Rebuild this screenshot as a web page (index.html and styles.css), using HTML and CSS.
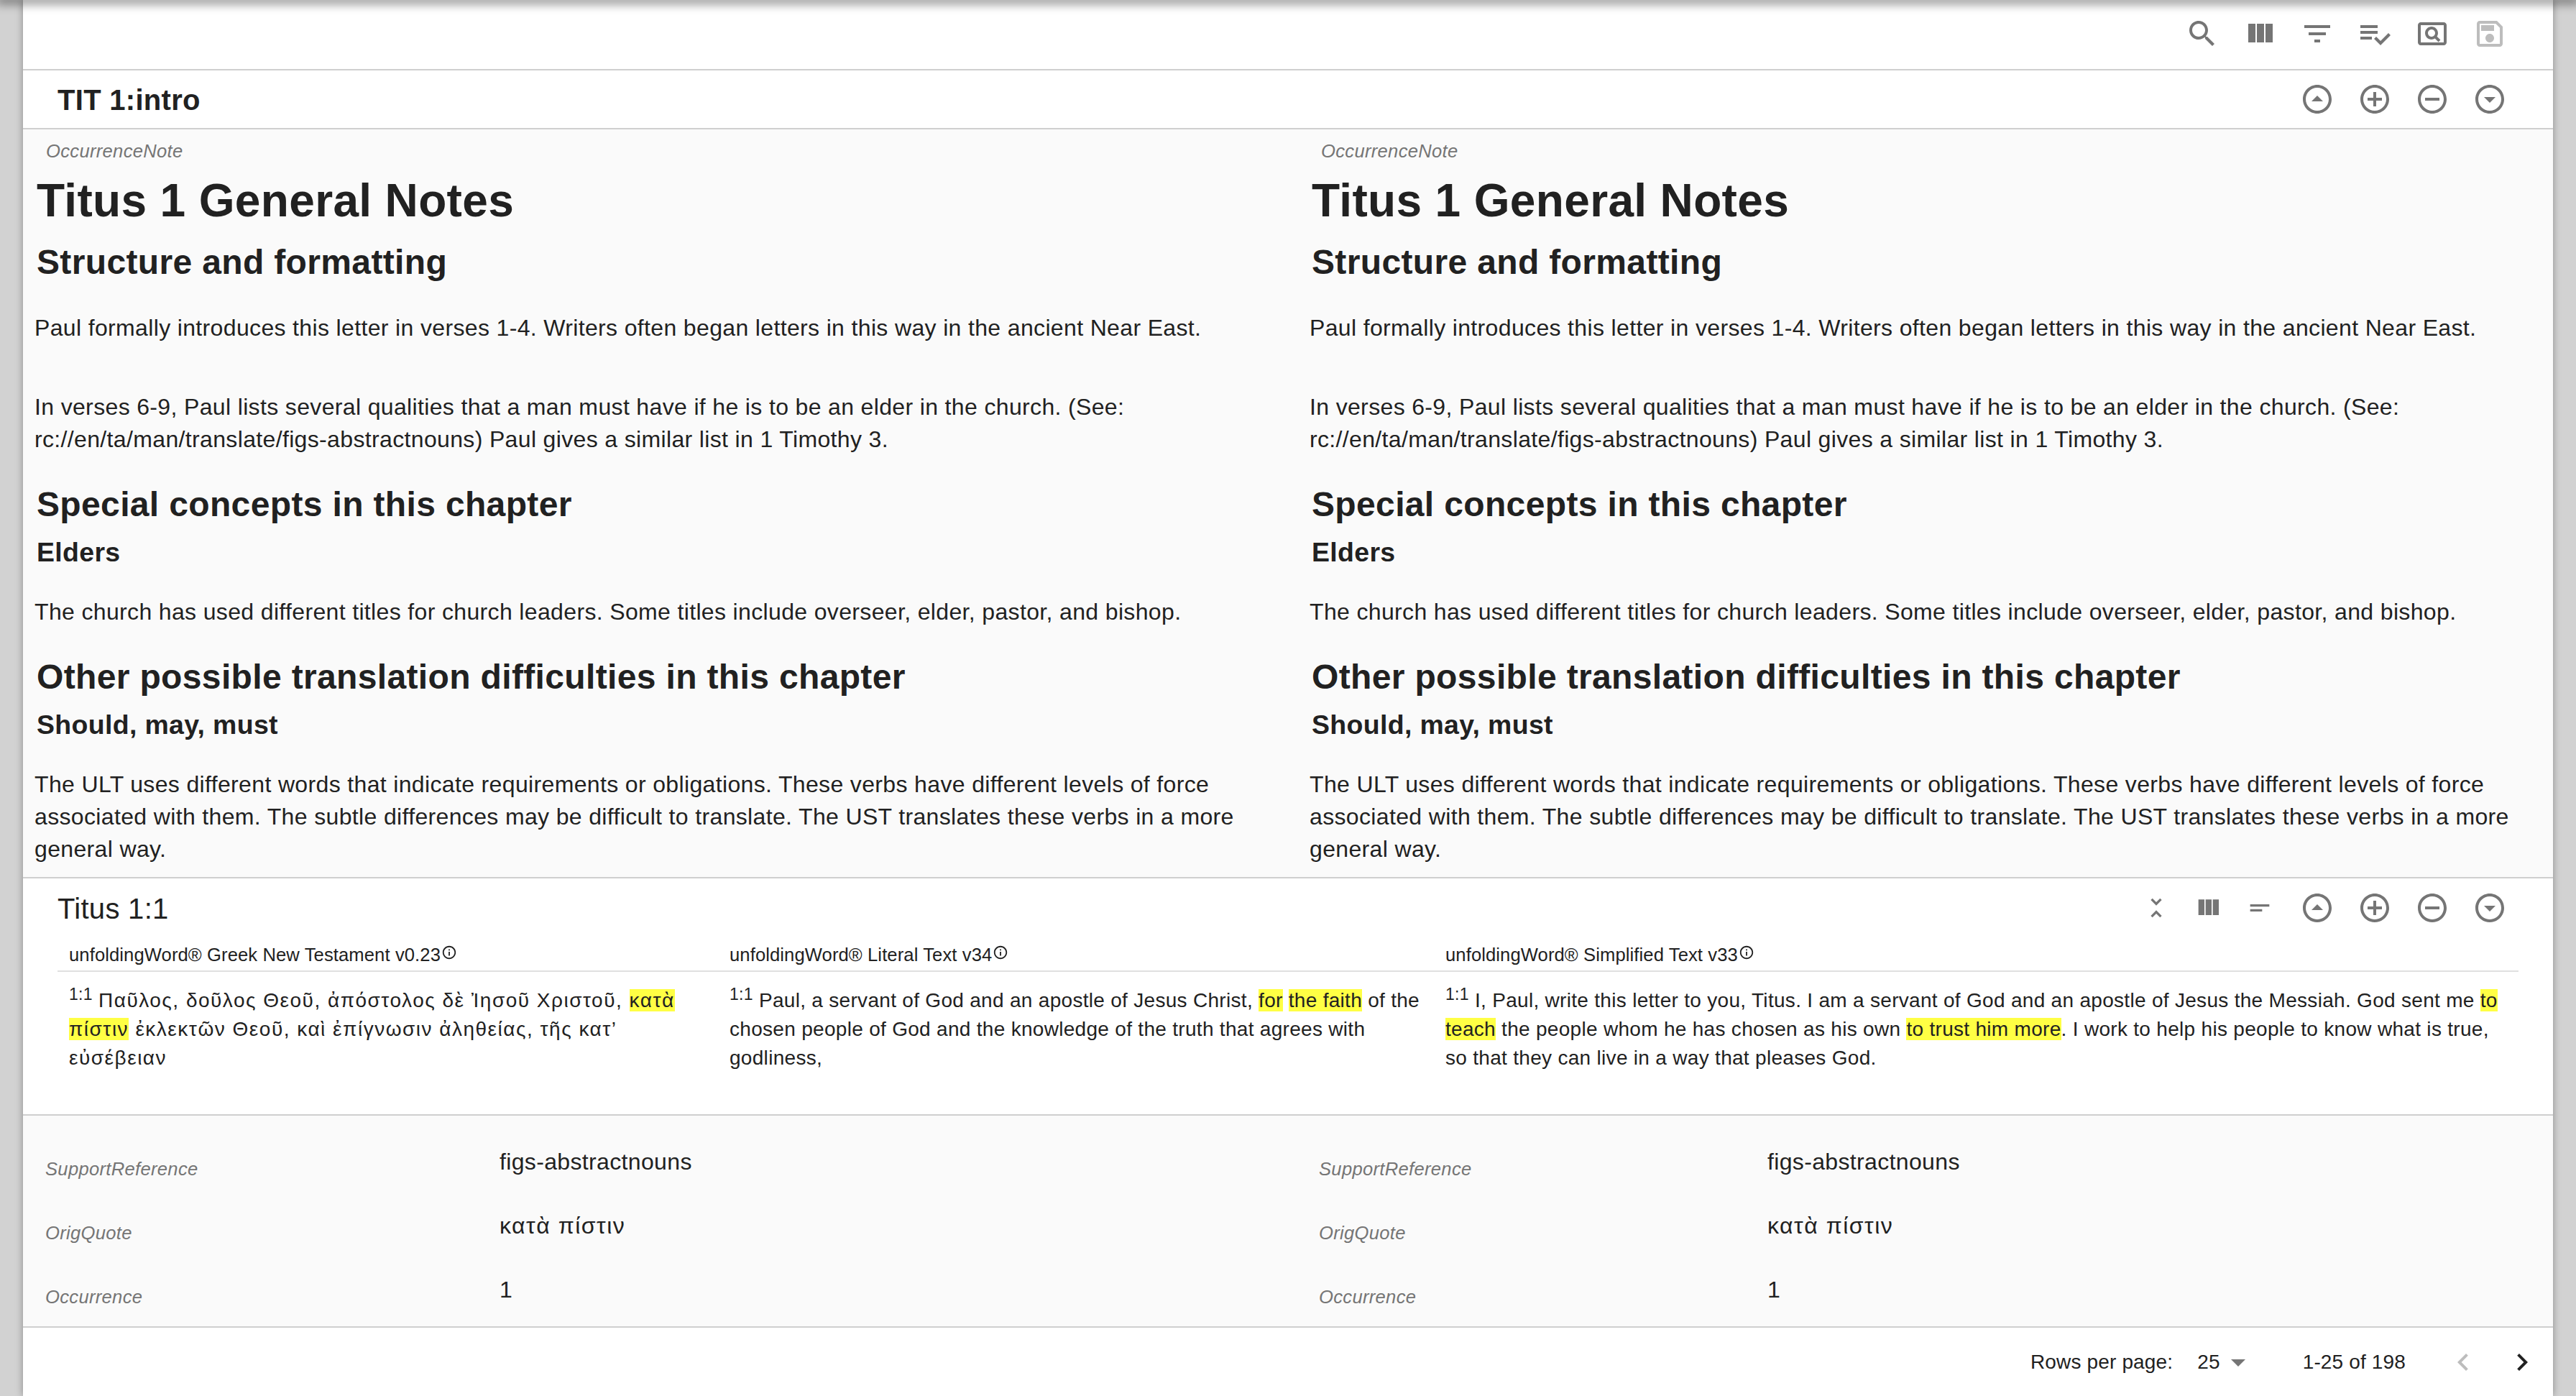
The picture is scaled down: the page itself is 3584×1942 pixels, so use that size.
FILE: index.html
```html
<!DOCTYPE html>
<html lang="en">

<head>
    <meta charset="UTF-8">
    <title>TIT 1:intro</title>
    <link rel="stylesheet" href="styles.css">
</head>

<body>
    <div class="appbar-shadow"></div>

    <div class="paper">
        <div class="toolbar">
            <button class="icon-btn"><svg viewBox="0 0 24 24"><path d="M15.5 14h-.79l-.28-.27C15.41 12.59 16 11.11 16 9.5 16 5.91 13.09 3 9.5 3S3 5.91 3 9.5 5.91 16 9.5 16c1.61 0 3.09-.59 4.23-1.57l.27.28v.79l5 4.99L20.49 19l-4.99-5zm-6 0C7.01 14 5 11.99 5 9.5S7.01 5 9.5 5 14 7.01 14 9.5 11.99 14 9.5 14z"/></svg></button>
            <button class="icon-btn"><svg viewBox="0 0 24 24"><path d="M10 18h5V5h-5v13zm-6 0h5V5H4v13zM16 5v13h5V5h-5z"/></svg></button>
            <button class="icon-btn"><svg viewBox="0 0 24 24"><path d="M10 18h4v-2h-4v2zM3 6v2h18V6H3zm3 7h12v-2H6v2z"/></svg></button>
            <button class="icon-btn"><svg viewBox="0 0 24 24"><path d="M14 10H2v2h12v-2zm0-4H2v2h12V6zM2 16h8v-2H2v2zm19.5-4.5L23 13l-6.99 7-4.51-4.5L13 14l3.01 3 5.49-5.5z"/></svg></button>
            <button class="icon-btn"><svg viewBox="0 0 24 24"><path d="M20 4H4c-1.1 0-2 .9-2 2v12c0 1.1.9 2 2 2h16c1.1 0 2-.9 2-2V6c0-1.1-.9-2-2-2zm0 14H4V6h16v12z"/><path d="M11.5 7C9 7 7 9 7 11.500s2 4.500 4.500 4.500c.88 0 1.690-.26 2.380-.7l2.410 2.410 1.410-1.410-2.410-2.410c.44-.69.7-1.500.7-2.390C16 9 14 7 11.500 7zm0 7C10.120 14 9 12.880 9 11.500S10.120 9 11.500 9 14 10.120 14 11.500 12.880 14 11.500 14z"/></svg></button>
            <button class="icon-btn disabled"><svg viewBox="0 0 24 24"><path d="M17 3H5c-1.110 0-2 .9-2 2v14c0 1.100.89 2 2 2h14c1.100 0 2-.9 2-2V7l-4-4zm2 16H5V5h11.170L19 7.830V19zm-7-7c-1.660 0-3 1.340-3 3s1.340 3 3 3 3-1.340 3-3-1.340-3-3-3zM6 6h9v4H6z"/></svg></button>
        </div>

        <div class="row-head">
            <h6 class="row-title bold">TIT 1:intro</h6>
            <div class="row-actions">
                <button class="icon-btn"><svg viewBox="0 0 24 24"><path d="M12 2C6.480 2 2 6.480 2 12s4.480 10 10 10 10-4.480 10-10S17.520 2 12 2zm0 18c-4.410 0-8-3.590-8-8s3.590-8 8-8 8 3.590 8 8-3.590 8-8 8z"/><path d="M8 13.500l4-4 4 4z"/></svg></button>
                <button class="icon-btn"><svg viewBox="0 0 24 24"><path d="M13 7h-2v4H7v2h4v4h2v-4h4v-2h-4V7zm-1-5C6.490 2 2 6.490 2 12s4.490 10 10 10 10-4.490 10-10S17.510 2 12 2zm0 18c-4.410 0-8-3.590-8-8s3.590-8 8-8 8 3.590 8 8-3.590 8-8 8z"/></svg></button>
                <button class="icon-btn"><svg viewBox="0 0 24 24"><path d="M7 11v2h10v-2H7zm5-9C6.480 2 2 6.480 2 12s4.480 10 10 10 10-4.480 10-10S17.520 2 12 2zm0 18c-4.410 0-8-3.590-8-8s3.590-8 8-8 8 3.590 8 8-3.590 8-8 8z"/></svg></button>
                <button class="icon-btn"><svg viewBox="0 0 24 24"><path d="M12 2C6.480 2 2 6.480 2 12s4.480 10 10 10 10-4.480 10-10S17.520 2 12 2zm0 18c-4.410 0-8-3.590-8-8s3.590-8 8-8 8 3.590 8 8-3.590 8-8 8z"/><path d="M8 10.500l4 4 4-4z"/></svg></button>
            </div>
        </div>

        <div class="notes">
            <div class="note">
                <div class="field-label">OccurrenceNote</div>
                <h1>Titus 1 General Notes</h1>
                <h2 class="first">Structure and formatting</h2>
                <p class="intro">Paul formally introduces this letter in verses 1-4. Writers often began letters in this way in the ancient Near East.</p>
                <p class="spaced">In verses 6-9, Paul lists several qualities that a man must have if he is to be an elder in the church. (See: rc://en/ta/man/translate/figs-abstractnouns) Paul gives a similar list in 1 Timothy 3.</p>
                <h2>Special concepts in this chapter</h2>
                <h3>Elders</h3>
                <p>The church has used different titles for church leaders. Some titles include overseer, elder, pastor, and bishop.</p>
                <h2>Other possible translation difficulties in this chapter</h2>
                <h3>Should, may, must</h3>
                <p>The ULT uses different words that indicate requirements or obligations. These verbs have different levels of force associated with them. The subtle differences may be difficult to translate. The UST translates these verbs in a more general way.</p>
            </div>
            <div class="note">
                <div class="field-label">OccurrenceNote</div>
                <h1>Titus 1 General Notes</h1>
                <h2 class="first">Structure and formatting</h2>
                <p class="intro">Paul formally introduces this letter in verses 1-4. Writers often began letters in this way in the ancient Near East.</p>
                <p class="spaced">In verses 6-9, Paul lists several qualities that a man must have if he is to be an elder in the church. (See: rc://en/ta/man/translate/figs-abstractnouns) Paul gives a similar list in 1 Timothy 3.</p>
                <h2>Special concepts in this chapter</h2>
                <h3>Elders</h3>
                <p>The church has used different titles for church leaders. Some titles include overseer, elder, pastor, and bishop.</p>
                <h2>Other possible translation difficulties in this chapter</h2>
                <h3>Should, may, must</h3>
                <p>The ULT uses different words that indicate requirements or obligations. These verbs have different levels of force associated with them. The subtle differences may be difficult to translate. The UST translates these verbs in a more general way.</p>
            </div>
        </div>

        <div class="scripture">
            <div class="row-head scripture-head">
                <h6 class="row-title">Titus 1:1</h6>
                <div class="row-actions">
                    <div class="small-icons">
                        <button class="icon-btn small"><svg viewBox="0 0 24 24"><path d="M7.410 18.590L8.830 20 12 16.830 15.170 20l1.410-1.410L12 14l-4.590 4.590zm9.180-13.180L15.170 4 12 7.170 8.830 4 7.410 5.410 12 10l4.590-4.590z"/></svg></button>
                        <button class="icon-btn small"><svg viewBox="0 0 24 24"><path d="M10 18h5V5h-5v13zm-6 0h5V5H4v13zM16 5v13h5V5h-5z"/></svg></button>
                        <button class="icon-btn small"><svg viewBox="0 0 24 24"><path d="M4 9h16v2H4zm0 4h10v2H4z"/></svg></button>
                    </div>
                    <button class="icon-btn"><svg viewBox="0 0 24 24"><path d="M12 2C6.480 2 2 6.480 2 12s4.480 10 10 10 10-4.480 10-10S17.520 2 12 2zm0 18c-4.410 0-8-3.590-8-8s3.590-8 8-8 8 3.590 8 8-3.590 8-8 8z"/><path d="M8 13.500l4-4 4 4z"/></svg></button>
                    <button class="icon-btn"><svg viewBox="0 0 24 24"><path d="M13 7h-2v4H7v2h4v4h2v-4h4v-2h-4V7zm-1-5C6.490 2 2 6.490 2 12s4.490 10 10 10 10-4.490 10-10S17.510 2 12 2zm0 18c-4.410 0-8-3.590-8-8s3.590-8 8-8 8 3.590 8 8-3.590 8-8 8z"/></svg></button>
                    <button class="icon-btn"><svg viewBox="0 0 24 24"><path d="M7 11v2h10v-2H7zm5-9C6.480 2 2 6.480 2 12s4.480 10 10 10 10-4.480 10-10S17.520 2 12 2zm0 18c-4.410 0-8-3.590-8-8s3.590-8 8-8 8 3.590 8 8-3.590 8-8 8z"/></svg></button>
                    <button class="icon-btn"><svg viewBox="0 0 24 24"><path d="M12 2C6.480 2 2 6.480 2 12s4.480 10 10 10 10-4.480 10-10S17.520 2 12 2zm0 18c-4.410 0-8-3.590-8-8s3.590-8 8-8 8 3.590 8 8-3.590 8-8 8z"/><path d="M8 10.500l4 4 4-4z"/></svg></button>
                </div>
            </div>
            <div class="texts">
                <div class="text-col">
                    <div class="text-head">unfoldingWord® Greek New Testament v0.23<svg class="info" viewBox="0 0 24 24"><path d="M11 7h2v2h-2zm0 4h2v6h-2zm1-9C6.480 2 2 6.480 2 12s4.480 10 10 10 10-4.480 10-10S17.520 2 12 2zm0 18c-4.410 0-8-3.590-8-8s3.590-8 8-8 8 3.590 8 8-3.590 8-8 8z"/></svg></div>
                    <div class="text-body"><sup>1:1</sup> <span class="greek">Παῦλος, δοῦλος Θεοῦ, ἀπόστολος δὲ Ἰησοῦ Χριστοῦ, <mark>κατὰ πίστιν</mark> ἐκλεκτῶν Θεοῦ, καὶ ἐπίγνωσιν ἀληθείας, τῆς κατ’ εὐσέβειαν</span></div>
                </div>
                <div class="text-col">
                    <div class="text-head">unfoldingWord® Literal Text v34<svg class="info" viewBox="0 0 24 24"><path d="M11 7h2v2h-2zm0 4h2v6h-2zm1-9C6.480 2 2 6.480 2 12s4.480 10 10 10 10-4.480 10-10S17.520 2 12 2zm0 18c-4.410 0-8-3.590-8-8s3.590-8 8-8 8 3.590 8 8-3.590 8-8 8z"/></svg></div>
                    <div class="text-body"><sup>1:1</sup> Paul, a servant of God and an apostle of Jesus Christ, <mark>for</mark> <mark>the faith</mark> of the chosen people of God and the knowledge of the truth that agrees with godliness,</div>
                </div>
                <div class="text-col">
                    <div class="text-head">unfoldingWord® Simplified Text v33<svg class="info" viewBox="0 0 24 24"><path d="M11 7h2v2h-2zm0 4h2v6h-2zm1-9C6.480 2 2 6.480 2 12s4.480 10 10 10 10-4.480 10-10S17.520 2 12 2zm0 18c-4.410 0-8-3.590-8-8s3.590-8 8-8 8 3.590 8 8-3.590 8-8 8z"/></svg></div>
                    <div class="text-body"><sup>1:1</sup> I, Paul, write this letter to you, Titus. I am a servant of God and an apostle of Jesus the Messiah. God sent me <mark>to teach</mark> the people whom he has chosen as his own <mark>to trust him more</mark>. I work to help his people to know what is true, so that they can live in a way that pleases God.</div>
                </div>
            </div>
        </div>

        <div class="fields">
            <div class="field-col">
                <div class="field">
                    <div class="field-label">SupportReference</div>
                    <div class="field-value">figs-abstractnouns</div>
                </div>
                <div class="field">
                    <div class="field-label">OrigQuote</div>
                    <div class="field-value greek">κατὰ πίστιν</div>
                </div>
                <div class="field">
                    <div class="field-label">Occurrence</div>
                    <div class="field-value">1</div>
                </div>
            </div>
            <div class="field-col right">
                <div class="field">
                    <div class="field-label">SupportReference</div>
                    <div class="field-value">figs-abstractnouns</div>
                </div>
                <div class="field">
                    <div class="field-label">OrigQuote</div>
                    <div class="field-value greek">κατὰ πίστιν</div>
                </div>
                <div class="field">
                    <div class="field-label">Occurrence</div>
                    <div class="field-value">1</div>
                </div>
            </div>
        </div>

        <div class="pager">
            <span class="pager-label">Rows per page:</span>
            <span class="pager-select">25<svg viewBox="0 0 24 24"><path d="M7 10l5 5 5-5z"/></svg></span>
            <span class="pager-count">1-25 of 198</span>
            <button class="page-btn off"><svg viewBox="0 0 24 24"><path d="M15.410 7.410L14 6l-6 6 6 6 1.410-1.410L10.830 12z"/></svg></button>
            <button class="page-btn"><svg viewBox="0 0 24 24"><path d="M10 6L8.590 7.410 13.170 12l-4.580 4.590L10 18l6-6z"/></svg></button>
        </div>
    </div>
</body>

</html>
```

FILE: styles.css
```css
* {
    box-sizing: border-box;
}

html,
body {
    height: 100%;
}

body {
    margin: 0;
    overflow: hidden;
    background-color: #d2d2d2;
    font-family: "Liberation Sans", Arial, sans-serif;
    color: #212121;
}

.appbar-shadow {
    position: absolute;
    top: 0;
    left: 0;
    right: 0;
    height: 0;
    z-index: 2;
    box-shadow: 0 0 14px 5px rgba(0, 0, 0, 0.5);
}

.paper {
    display: flex;
    flex-direction: column;
    height: 1942px;
    margin: 0 32px;
    background-color: #fff;
    box-shadow: 0 0 10px rgba(0, 0, 0, 0.35);
}

.paper > * {
    flex: none;
}

button {
    border: 0;
    padding: 0;
    background: none;
}

svg {
    display: block;
    fill: currentColor;
}

/* top toolbar */
.toolbar {
    display: flex;
    justify-content: flex-end;
    align-items: center;
    height: 98px;
    padding: 0 48px 2px 0;
    border-bottom: 2px solid #cfcfcf;
}

.icon-btn {
    display: flex;
    justify-content: center;
    align-items: center;
    width: 80px;
    color: #757575;
}

.icon-btn svg {
    width: 48px;
    height: 48px;
}

.icon-btn.disabled {
    color: #bdbdbd;
}

.icon-btn.small {
    width: 72px;
}

.icon-btn.small svg {
    width: 40px;
    height: 40px;
}

.small-icons {
    display: flex;
    margin-right: 4px;
}

/* row titles */
.row-head {
    display: flex;
    justify-content: space-between;
    align-items: center;
    height: 82px;
    padding: 0 48px;
    border-bottom: 2px solid #cfcfcf;
}

.row-title {
    margin: 2px 0 0;
    font-size: 40px;
    font-weight: 400;
    letter-spacing: 0.3px;
}

.row-title.bold {
    font-weight: 700;
}

.row-actions {
    display: flex;
    align-items: center;
}

/* note columns */
.notes {
    display: grid;
    grid-template-columns: 1fr 1fr;
    column-gap: 48px;
    height: 1040px;
    overflow: hidden;
    padding: 0 4px 0 16px;
    background-color: #fafafa;
    letter-spacing: 0.35px;
}

.field-label {
    font-size: 25.6px;
    font-style: italic;
    letter-spacing: 0.3px;
    color: #757575;
}

.note .field-label {
    padding: 16px 0 0 16px;
    line-height: 28px;
}

.note h1 {
    margin: 18px 0 0 3px;
    font-size: 64px;
    line-height: 74px;
}

.note h2 {
    margin: 40px 0 0 3px;
    font-size: 48px;
    line-height: 55px;
}

.note h2.first {
    margin-top: 21px;
}

.note h3 {
    margin: 18px 0 0 3px;
    font-size: 37.44px;
    line-height: 42px;
}

.note p {
    margin: 40px 0 0;
    font-size: 32px;
    line-height: 45px;
}

.note p.intro {
    margin-top: 42px;
}

.note p.spaced {
    margin-top: 65px;
}

/* scripture panel */
.scripture {
    height: 332px;
    border-top: 2px solid #cfcfcf;
    border-bottom: 2px solid #cfcfcf;
}

.scripture-head {
    height: 82px;
    border-bottom: 0;
}

.texts {
    display: grid;
    grid-template-columns: 919px 996px 1509px;
    margin: 0 48px;
}

.text-head {
    display: flex;
    align-items: flex-start;
    height: 48px;
    padding: 10px 16px 0;
    border-bottom: 2px solid #e0e0e0;
    font-size: 25.6px;
    line-height: 28px;
    letter-spacing: 0.1px;
}

.info {
    flex: none;
    width: 22px;
    height: 22px;
    margin-left: 1px;
}

.text-body {
    padding: 20px 16px 0;
    font-size: 28px;
    line-height: 40px;
    letter-spacing: 0.3px;
}

.text-body sup {
    font-size: 23px;
    line-height: 0;
}

.text-body .greek,
.field-value.greek {
    letter-spacing: 1.5px;
}

mark {
    background-color: #ffff44;
    color: inherit;
}

/* bottom fields */
.fields {
    display: grid;
    grid-template-columns: 1772px 1fr;
    height: 293px;
    padding: 30px 0 0 31px;
    background-color: #fafafa;
}

.field {
    display: grid;
    grid-template-columns: 632px 1fr;
    height: 89px;
}

.right .field {
    grid-template-columns: 624px 1fr;
}

.fields .field-label {
    align-self: center;
}

.field-value {
    padding-top: 14px;
    font-size: 32px;
    line-height: 40px;
    letter-spacing: 0.35px;
}

/* pagination */
.pager {
    display: flex;
    justify-content: flex-end;
    align-items: center;
    height: 97px;
    padding-right: 19px;
    border-top: 2px solid #cfcfcf;
    font-size: 28px;
    letter-spacing: 0.15px;
}

.pager-select {
    display: flex;
    align-items: center;
    margin-left: 34px;
}

.pager-select svg {
    width: 48px;
    height: 48px;
    margin-left: 1px;
    color: #757575;
}

.pager-count {
    margin-left: 66px;
}

.page-btn {
    width: 48px;
    color: #212121;
}

.page-btn svg {
    width: 48px;
    height: 48px;
}

.pager-count + .page-btn {
    margin-left: 56px;
    margin-right: 34px;
}

.page-btn.off {
    color: #bdbdbd;
}
```
